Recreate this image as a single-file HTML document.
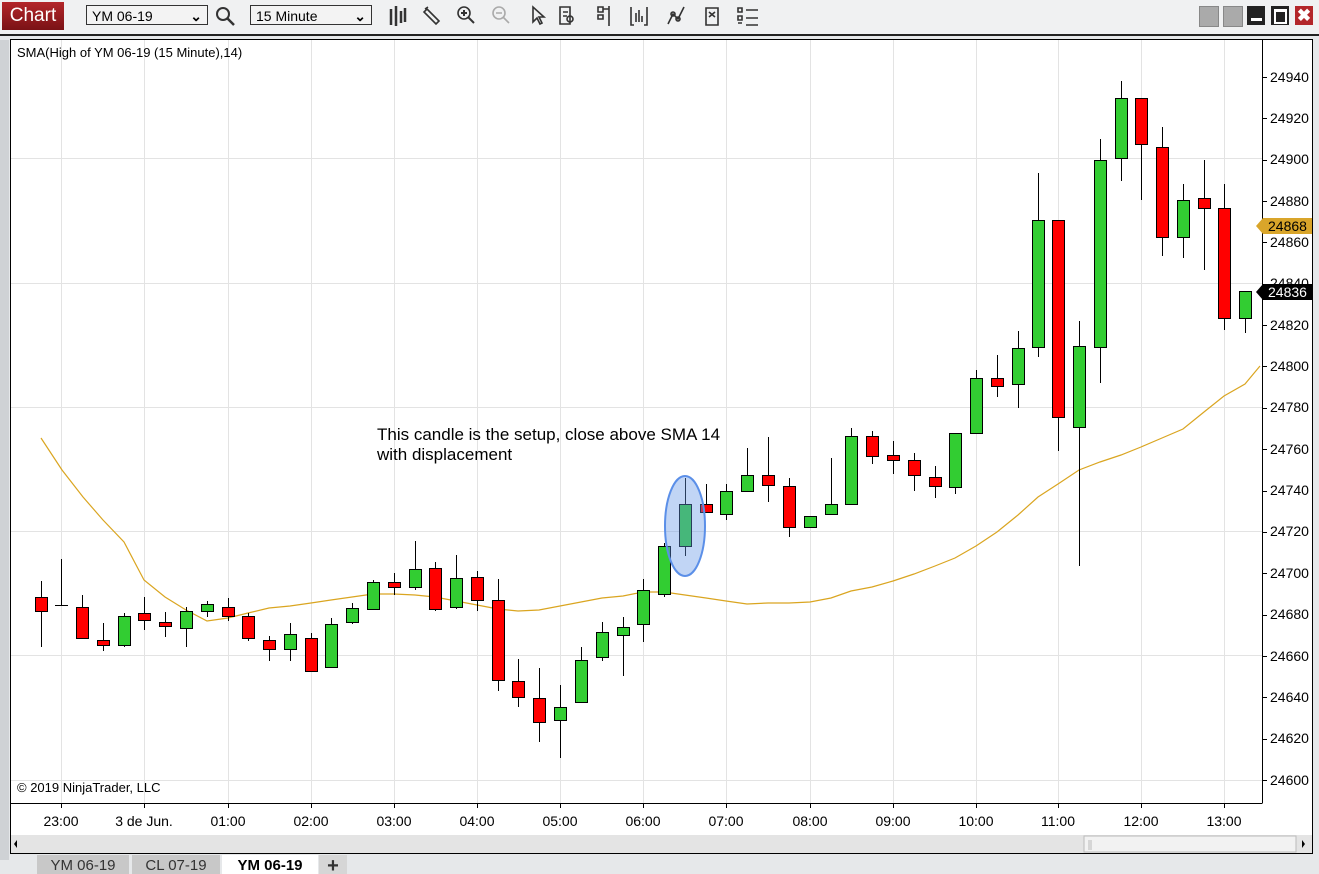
<!DOCTYPE html><html><head><style>
html,body{margin:0;width:1319px;height:874px;overflow:hidden}
body{background:#e6e8ea;font-family:"Liberation Sans",sans-serif;position:relative}
.abs{position:absolute}
.sel{position:absolute;top:5px;height:20px;border:1px solid #333;background:#f3f3f3;font-size:14px;line-height:20px;padding-left:5px;box-sizing:border-box}
.tab{position:absolute;top:855px;height:19px;font-size:15px;line-height:22px;text-align:center;color:#333;overflow:hidden}
</style></head><body>
<div class="abs" style="left:0;top:0;width:1319px;height:34px;background:#f0f1f2;border-bottom:2px solid #222"></div>
<div class="abs" style="left:2px;top:2px;width:62px;height:28px;background:linear-gradient(#b3262a,#7a1216);color:#fff;font-size:19px;line-height:28px;text-align:center">Chart</div>
<div class="sel" style="left:86px;width:122px">YM 06-19<span style="position:absolute;right:5px;font-weight:bold">&#x2304;</span></div>
<svg class="abs" style="left:214px;top:5px" width="22" height="22"><circle cx="9" cy="9" r="6" fill="none" stroke="#333" stroke-width="2"/><path d="M13 13l7 7" stroke="#333" stroke-width="2.5"/></svg>
<div class="sel" style="left:250px;width:122px">15 Minute<span style="position:absolute;right:5px;font-weight:bold">&#x2304;</span></div>
<svg class="abs" style="left:385px;top:3px" width="380" height="26" fill="none" stroke="#333" stroke-width="1.6">
<path d="M6 6v16M11 3v20M16 8v12M20 5v14" stroke-width="2.5"/>
<path d="M42 6l12 12-3 3-12-12z M40 6l3-2"/>
<circle cx="79" cy="10" r="6"/><path d="M83 14l6 6M76 10h6M79 7v6" stroke-width="2"/>
<g stroke="#aaa"><circle cx="114" cy="10" r="6"/><path d="M118 14l6 6M111 10h6"/></g>
<path d="M148 4v15l4-4 3 6 2-1-3-6h5z"/>
<path d="M175 4h10v17h-10zM178 9h5M178 13h4"/><circle cx="185" cy="16" r="3"/>
<path d="M213 4h5v5h-5zM213 12h5v4h-5zM218 6h6M224 3v20"/>
<path d="M246 4v18h3M262 4v18h-3M251 19V10M254 19V7M257 19v-6"/>
<path d="M283 21l5-10 5 5 6-12"/><circle cx="288" cy="11" r="2"/><circle cx="293" cy="16" r="2"/>
<path d="M321 5h12v17h-12zM324 9l6 5M330 9l-6 5"/>
<path d="M353 5h4v4h-4zM353 13h4v4h-4zM353 20h4M361 7h12M361 15h12M361 22h12"/>
</svg>
<div class="abs" style="left:1199px;top:6px;width:18px;height:19px;background:#aaa;border:1px solid #888"></div>
<div class="abs" style="left:1223px;top:6px;width:18px;height:19px;background:#aaa;border:1px solid #888"></div>
<div class="abs" style="left:1247px;top:6px;width:18px;height:19px;background:#222"><div style="position:absolute;left:4px;top:12px;width:11px;height:3px;background:#fff"></div></div>
<div class="abs" style="left:1271px;top:6px;width:18px;height:19px;background:#222"><div style="position:absolute;left:3px;top:3px;width:9px;height:10px;border:2px solid #fff;border-top-width:3px"></div></div>
<div class="abs" style="left:1295px;top:6px;width:18px;height:19px;background:#b3262a;color:#fff;font-weight:bold;font-size:17px;line-height:19px;text-align:center">&#x2716;</div>
<div class="abs" style="left:0;top:40px;width:9px;height:820px;background:#cfd2d5"></div>
<svg class="abs" style="left:0;top:0" width="1319" height="874" id="c">
<rect x="10.5" y="39.5" width="1302" height="814" fill="#fff" stroke="#000"/>
<rect x="11" y="835" width="1301" height="18" fill="#e4e4e4"/>
<rect x="1084" y="836" width="212" height="16" fill="#f2f2f2" stroke="#bbb"/>
<path d="M1089 840v10M1091 840v10" stroke="#bbb"/>
<path d="M17 840v8l-3-4z" fill="#000"/><path d="M1302 840v8l3-4z" fill="#000"/>
<g id="grid" stroke="#e3e3e3"></g>
<path d="M10.5 803.5H1262.5M1262.5 39V803" stroke="#000" fill="none"/>
<g id="ticks" stroke="#000"></g>
<g font-size="14" fill="#000" text-anchor="middle">
<text x="61" y="826">23:00</text><text x="144" y="826">3 de Jun.</text><text x="228" y="826">01:00</text><text x="311" y="826">02:00</text><text x="394" y="826">03:00</text><text x="477" y="826">04:00</text><text x="560" y="826">05:00</text><text x="643" y="826">06:00</text><text x="726" y="826">07:00</text><text x="810" y="826">08:00</text><text x="893" y="826">09:00</text><text x="976" y="826">10:00</text><text x="1058" y="826">11:00</text><text x="1141" y="826">12:00</text><text x="1224" y="826">13:00</text>
</g>
<g font-size="14" fill="#000">
<text x="1270" y="82">24940</text><text x="1270" y="123">24920</text><text x="1270" y="164">24900</text><text x="1270" y="206">24880</text><text x="1270" y="247">24860</text><text x="1270" y="288">24840</text><text x="1270" y="330">24820</text><text x="1270" y="371">24800</text><text x="1270" y="412">24780</text><text x="1270" y="454">24760</text><text x="1270" y="495">24740</text><text x="1270" y="536">24720</text><text x="1270" y="578">24700</text><text x="1270" y="619">24680</text><text x="1270" y="661">24660</text><text x="1270" y="702">24640</text><text x="1270" y="743">24620</text><text x="1270" y="785">24600</text>
</g>
<path d="M1256 226l7-8h49v16h-49z" fill="#d9a52a"/><text x="1268" y="231" font-size="14">24868</text>
<path d="M1256 292l7-8h49v16h-49z" fill="#000"/><text x="1268" y="297" font-size="14" fill="#fff">24836</text>
<text x="17" y="57" font-size="13">SMA(High of YM 06-19 (15 Minute),14)</text>
<text x="17" y="792" font-size="13">© 2019 NinjaTrader, LLC</text>
<text x="377" y="440" font-size="17">This candle is the setup, close above SMA 14</text>
<text x="377" y="460" font-size="17">with displacement</text>
<polyline id="sma" fill="none" stroke="#daa520" stroke-width="1.2" points=""/>
<g id="cd"></g>
<ellipse cx="685" cy="526" rx="20" ry="50" fill="rgba(100,150,230,0.4)" stroke="#5b8fe8" stroke-width="2"/>
</svg>
<div class="tab" style="left:37px;width:92px;background:#c8c8c8">YM 06-19</div>
<div class="tab" style="left:132px;width:88px;background:#c8c8c8">CL 07-19</div>
<div class="tab" style="left:222px;width:96px;background:#fff;font-weight:bold;color:#000">YM 06-19</div>
<div class="tab" style="left:319px;width:28px;background:#d6d6d6;font-weight:bold;font-size:20px">+</div>
<script>
var ns="http://www.w3.org/2000/svg";
function el(p,t,a){var e=document.createElementNS(ns,t);for(var k in a)e.setAttribute(k,a[k]);document.getElementById(p).appendChild(e);}
var tx=[61,144,228,311,394,477,560,643,726,810,893,976,1058,1141,1224];
tx.forEach(function(x){el("grid","line",{x1:x+.5,x2:x+.5,y1:40,y2:803});el("ticks","line",{x1:x+.5,x2:x+.5,y1:803,y2:808});});
[158,283,407,531,655,780].forEach(function(y){el("grid","line",{x1:11,x2:1262,y1:y+.5,y2:y+.5});});
for(var i=0;i<18;i++){var y=Math.round(77+i*41.35)+.5;el("ticks","line",{x1:1262,x2:1267,y1:y,y2:y});}
var C=[[41,597,611,581,647,0],[61,605,605,559,606,2],[82,607,638,595,638,0],[103,640,645,623,651,0],[124,616,645,613,647,1],[144,613,620,597,630,0],[165,622,626,612,637,0],[186,611,628,607,647,1],[207,604,611,601,617,1],[228,607,616,598,621,0],[248,616,638,613,641,0],[269,640,649,636,661,0],[290,634,649,623,661,1],[311,638,671,633,671,0],[331,624,667,618,667,1],[352,608,622,603,624,1],[373,582,609,580,609,1],[394,582,587,573,595,0],[415,569,587,541,590,1],[435,568,609,562,611,0],[456,578,607,555,609,1],[477,577,600,571,611,0],[498,600,680,579,691,0],[518,681,697,659,707,0],[539,698,722,668,742,0],[560,707,720,685,758,1],[581,660,702,647,703,1],[602,632,657,622,661,1],[623,627,635,617,676,1],[643,590,624,579,642,1],[664,546,594,543,597,1],[685,504,546,478,556,1],[706,504,512,484,512,0],[726,491,514,484,520,1],[747,475,491,448,492,1],[768,475,485,437,502,0],[789,486,527,478,537,0],[810,516,527,516,527,1],[831,504,514,458,514,1],[851,436,504,428,505,1],[872,436,456,431,464,0],[893,455,460,441,474,0],[914,460,475,453,491,0],[935,477,486,466,498,0],[955,433,487,433,494,1],[976,378,433,370,433,1],[997,378,386,355,397,0],[1018,348,384,331,408,1],[1038,220,347,173,357,1],[1058,220,417,220,451,0],[1079,346,427,321,566,1],[1100,160,347,139,383,1],[1121,98,158,81,181,1],[1141,98,144,98,200,0],[1162,147,237,127,256,0],[1183,200,237,184,258,1],[1204,198,208,160,270,0],[1224,208,318,184,330,0],[1245,291,318,291,333,1]];
C.forEach(function(c){var x=c[0];el("cd","line",{x1:x+.5,x2:x+.5,y1:c[3],y2:c[4],stroke:"#000"});
if(c[5]==2){el("cd","line",{x1:x-6,x2:x+7,y1:c[1]+.5,y2:c[1]+.5,stroke:"#000"});return;}
el("cd","rect",{x:x-5.5,y:c[1]+.5,width:12,height:Math.max(c[2]-c[1],2),fill:c[5]?"#32cd32":"#ff0000",stroke:"#000"});});
var S=[[41,438],[62,470],[83,497],[103,520],[124,542],[144,580],[165,597],[186,610],[207,621],[228,618],[248,613],[269,608],[290,606],[311,603],[331,600],[352,597],[373,594],[394,594],[415,595],[435,597],[456,601],[477,605],[498,609],[518,611],[539,610],[560,606],[581,602],[602,598],[623,596],[643,592],[664,592],[685,595],[706,598],[726,601],[747,604],[768,603],[789,603],[810,602],[831,598],[851,591],[872,587],[893,581],[914,574],[935,566],[955,558],[976,546],[997,532],[1018,515],[1038,497],[1058,484],[1079,470],[1100,462],[1121,455],[1141,447],[1162,438],[1183,429],[1204,412],[1224,396],[1245,384],[1260,366]];
document.getElementById("sma").setAttribute("points",S.map(function(p){return p.join(",")}).join(" "));
</script>
</body></html>
